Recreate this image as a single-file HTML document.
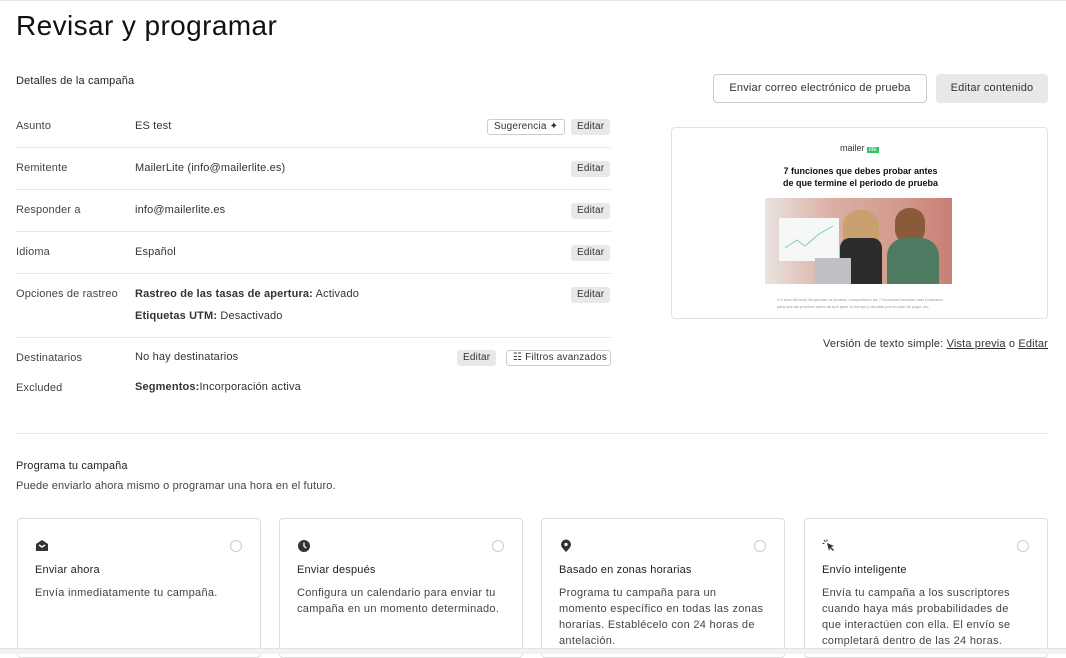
<!DOCTYPE html>
<html><head><meta charset="utf-8"><style>
*{box-sizing:border-box;margin:0;padding:0}
body{width:1066px;height:653px;overflow:hidden;background:#fff;font-family:"Liberation Sans",Arial,sans-serif;color:#222;position:relative;border-top:1px solid #e5e5e5}
.a{position:absolute;white-space:nowrap}
.s{font-size:11px;color:#333;letter-spacing:.15px}
.l{font-size:11px;color:#444;letter-spacing:.15px}
.hr{position:absolute;height:1px;background:#e6e6e6}
.ed{position:absolute;white-space:nowrap;height:16px;background:#e8e8ea;border-radius:3px;font-size:10px;color:#333;line-height:16px;padding:0 6px;letter-spacing:.2px}
.ob{position:absolute;white-space:nowrap;height:16px;border:1px solid #ccc;border-radius:3px;font-size:10px;color:#333;line-height:14px;padding:0 6px;background:#fff;letter-spacing:.2px}
.card{position:absolute;top:517px;height:140px;border:1px solid #dcdcdc;border-radius:4px;background:#fff}
.card .t{position:absolute;left:17px;top:45px;font-size:11px;color:#222;letter-spacing:.2px}
.card .d{position:absolute;left:17px;top:66px;font-size:11px;color:#444;line-height:16px;width:212px;letter-spacing:.3px}
.card .r{position:absolute;right:18px;top:21px;width:12px;height:12px;border:1px solid #ccc;border-radius:50%}
.card svg{position:absolute;left:17px;top:20px}
</style></head><body>
<div class="a" style="left:16px;top:9px;font-size:28px;color:#111;letter-spacing:.4px">Revisar y programar</div>
<div class="a s" style="left:16px;top:74px;color:#222">Detalles de la campaña</div>

<div class="a l" style="left:16px;top:119px">Asunto</div><div class="a s" style="left:135px;top:119px">ES test</div>
<div class="ob" style="left:487px;top:118px;width:78px">Sugerencia ✦</div><div class="ed" style="left:571px;top:118px">Editar</div>
<div class="hr" style="left:16px;width:595px;top:146px"></div>
<div class="a l" style="left:16px;top:161px">Remitente</div><div class="a s" style="left:135px;top:161px">MailerLite (info@mailerlite.es)</div><div class="ed" style="left:571px;top:160px">Editar</div>
<div class="hr" style="left:16px;width:595px;top:188px"></div>
<div class="a l" style="left:16px;top:203px">Responder a</div><div class="a s" style="left:135px;top:203px">info@mailerlite.es</div><div class="ed" style="left:571px;top:202px">Editar</div>
<div class="hr" style="left:16px;width:595px;top:230px"></div>
<div class="a l" style="left:16px;top:245px">Idioma</div><div class="a s" style="left:135px;top:245px">Español</div><div class="ed" style="left:571px;top:244px">Editar</div>
<div class="hr" style="left:16px;width:595px;top:272px"></div>
<div class="a l" style="left:16px;top:287px">Opciones de rastreo</div><div class="a s" style="left:135px;top:287px"><b>Rastreo de las tasas de apertura:</b> Activado</div><div class="ed" style="left:571px;top:286px">Editar</div>
<div class="a s" style="left:135px;top:309px"><b>Etiquetas UTM:</b> Desactivado</div>
<div class="hr" style="left:16px;width:595px;top:336px"></div>
<div class="a l" style="left:16px;top:351px">Destinatarios</div><div class="a s" style="left:135px;top:350px">No hay destinatarios</div>
<div class="ed" style="left:457px;top:349px">Editar</div><div class="ob" style="left:506px;top:349px;width:105px">☷ Filtros avanzados</div>
<div class="a l" style="left:16px;top:381px">Excluded</div><div class="a s" style="left:135px;top:380px"><b>Segmentos:</b>Incorporación activa</div>

<div class="a" style="left:713px;top:73px;width:214px;height:29px;border:1px solid #ccc;border-radius:4px;font-size:11px;color:#333;text-align:center;line-height:27px;letter-spacing:.2px">Enviar correo electrónico de prueba</div>
<div class="a" style="left:936px;top:73px;width:112px;height:29px;background:#e8e8ea;border-radius:4px;font-size:11px;color:#333;text-align:center;line-height:29px;letter-spacing:.2px">Editar contenido</div>

<div class="a" style="left:671px;top:126px;width:377px;height:192px;border:1px solid #e2e2e2;border-radius:4px;overflow:hidden">
 <div class="a" style="left:168px;top:15px;font-size:9px;color:#333">mailer <span style="background:#2cc36b;color:#fff;font-size:6px;padding:0 2px">lite</span></div>
 <div class="a" style="left:0;width:377px;top:37px;text-align:center;font-size:9px;font-weight:bold;line-height:12px;color:#111">7 funciones que debes probar antes<br>de que termine el periodo de prueba</div>
 <div class="a" style="left:93px;top:70px;width:187px;height:86px;background:linear-gradient(90deg,#e9e3df 0%,#dcb0a5 35%,#d39b8e 70%,#c97f75 100%)">
  <div class="a" style="left:14px;top:20px;width:60px;height:43px;background:#f5f8f6"><svg width="60" height="43"><path d="M6 30 L18 22 L26 28 L40 16 L54 8" stroke="#7fcfa0" fill="none"/></svg></div>
  <div class="a" style="left:78px;top:12px;width:36px;height:60px;background:#c9a070;border-radius:16px 16px 0 0"></div>
  <div class="a" style="left:75px;top:40px;width:42px;height:46px;background:#2b2b2b;border-radius:10px 10px 0 0"></div>
  <div class="a" style="left:130px;top:10px;width:30px;height:36px;background:#8a5a3a;border-radius:14px"></div>
  <div class="a" style="left:122px;top:40px;width:52px;height:46px;background:#4f7a62;border-radius:18px 18px 0 0"></div>
  <div class="a" style="left:50px;top:60px;width:36px;height:26px;background:#bfbfc4"></div>
 </div>
 <div class="a" style="left:105px;top:168px;width:170px;font-size:4px;color:#999;line-height:7px;white-space:normal">A 3 días del final del periodo de prueba, compartimos las 7 funciones favoritas más populares para que las pruebes antes de que pase tu tiempo y decidas por un plan de pago, etc.</div>
</div>
<div class="a s" style="right:18px;top:337px">Versión de texto simple: <u>Vista previa</u> o <u>Editar</u></div>

<div class="hr" style="left:16px;width:1032px;top:432px"></div>
<div class="a s" style="left:16px;top:459px;color:#222">Programa tu campaña</div>
<div class="a l" style="left:16px;top:479px">Puede enviarlo ahora mismo o programar una hora en el futuro.</div>

<div class="card" style="left:17px;width:244px">
 <svg width="14" height="14" viewBox="0 0 14 14"><path d="M1 5 L7 1 L13 5 V12 H1Z" fill="#333"/><path d="M4 6 L7 8 L10 6" stroke="#fff" stroke-width="1.4" fill="none"/></svg>
 <div class="r"></div><div class="t">Enviar ahora</div><div class="d">Envía inmediatamente tu campaña.</div></div>
<div class="card" style="left:279px;width:244px">
 <svg width="14" height="14" viewBox="0 0 14 14"><circle cx="7" cy="7" r="6" fill="#333"/><path d="M7 3.5 V7.2 L9.3 9" stroke="#fff" stroke-width="1.3" fill="none"/></svg>
 <div class="r"></div><div class="t">Enviar después</div><div class="d">Configura un calendario para enviar tu<br>campaña en un momento determinado.</div></div>
<div class="card" style="left:541px;width:244px">
 <svg width="14" height="14" viewBox="0 0 14 14"><path d="M7 13 C3 9 2 7 2 5.5 A5 5 0 0 1 12 5.5 C12 7 11 9 7 13Z" fill="#333"/><circle cx="7" cy="5.5" r="1.6" fill="#fff"/></svg>
 <div class="r"></div><div class="t">Basado en zonas horarias</div><div class="d">Programa tu campaña para un<br>momento específico en todas las zonas<br>horarias. Establécelo con 24 horas de<br>antelación.</div></div>
<div class="card" style="left:804px;width:244px">
 <svg width="14" height="14" viewBox="0 0 14 14"><path d="M5 4 L12 7 L9 8 L12 11 L11 12 L8 9 L7 12Z" fill="#333"/><path d="M2 1 L3.5 3 M5 0.5 V2.5 M0.5 4.5 H2.5" stroke="#333" stroke-width="1"/></svg>
 <div class="r"></div><div class="t">Envío inteligente</div><div class="d">Envía tu campaña a los suscriptores<br>cuando haya más probabilidades de<br>que interactúen con ella. El envío se<br>completará dentro de las 24 horas.</div></div>
<div class="a" style="left:0;top:647px;width:1066px;height:6px;background:#f2f2f2;border-top:1px solid #e3e3e3"></div>
</body></html>
